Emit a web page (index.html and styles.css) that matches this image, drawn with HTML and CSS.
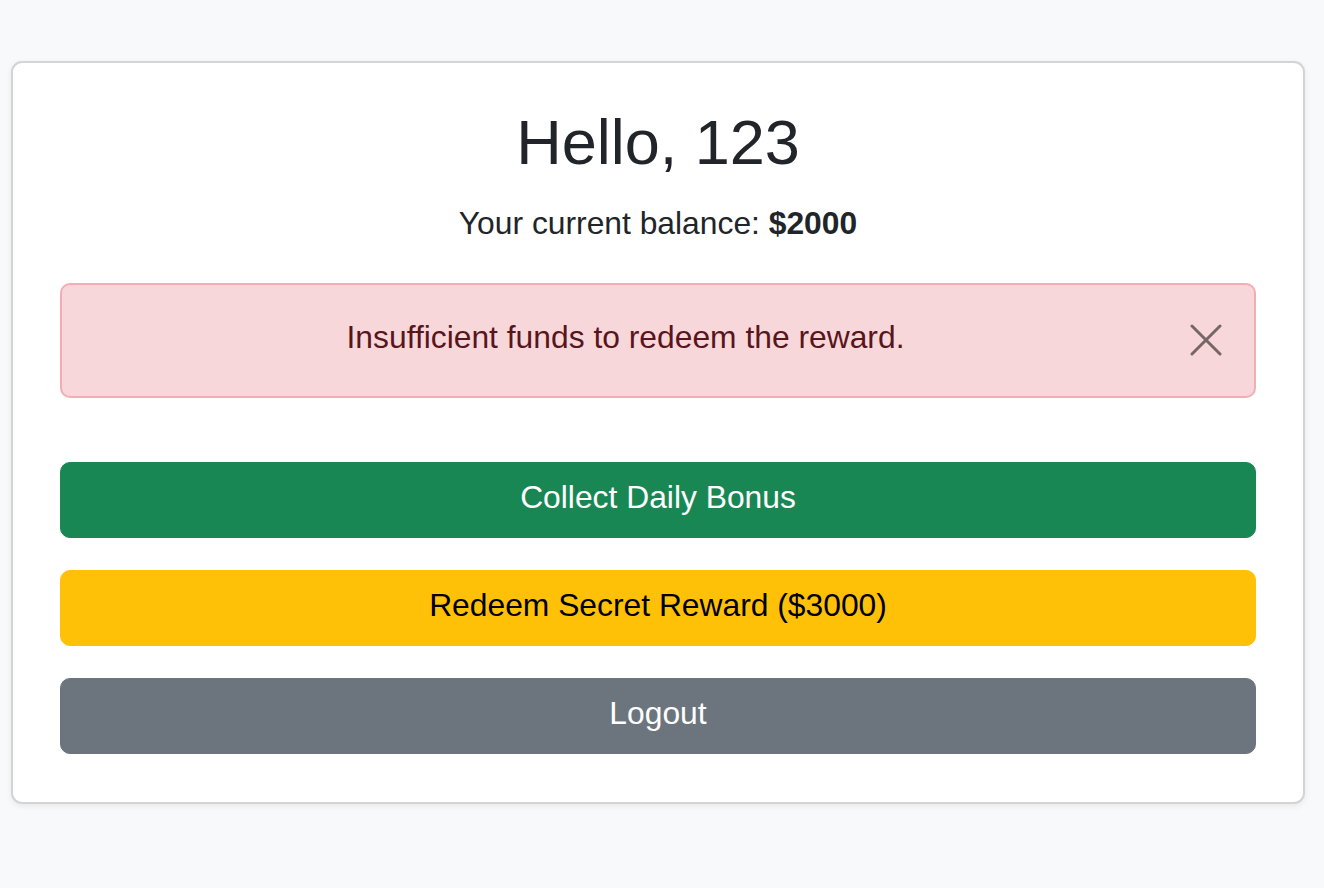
FILE: index.html
```html
<!DOCTYPE html>
<html lang="en">
<head>
<meta charset="utf-8">
<title>Dashboard</title>
<link rel="stylesheet" href="styles.css">
</head>
<body>
  <main class="page">
    <section class="card">
      <h1 class="title">Hello, 123</h1>
      <p class="balance">Your current balance: <strong>$2000</strong></p>
      <div class="alert" role="alert">
        <span class="alert-text">Insufficient funds to redeem the reward.</span>
        <button class="alert-close" type="button" aria-label="Close">
          <svg width="32" height="32" viewBox="0 0 32 32" aria-hidden="true">
            <path d="M2 2 L30 30 M30 2 L2 30" stroke="#000" stroke-width="3" stroke-linecap="round" fill="none"/>
          </svg>
        </button>
      </div>
      <div class="actions">
        <button class="btn btn-success" type="button">Collect Daily Bonus</button>
        <button class="btn btn-warning" type="button">Redeem Secret Reward ($3000)</button>
        <button class="btn btn-secondary" type="button">Logout</button>
      </div>
    </section>
  </main>
</body>
</html>
```

FILE: styles.css
```css
* {
  box-sizing: border-box;
}

html, body {
  margin: 0;
  padding: 0;
}

body {
  background: #f8f9fa;
  font-family: "Liberation Sans", Arial, Helvetica, sans-serif;
  color: #212529;
  min-height: 888px;
}

.page {
  padding: 61px 19px 0 11px;
}

.card {
  background: #ffffff;
  border: 2px solid #d3d4d5;
  border-radius: 11px;
  box-shadow: 0 2px 6px rgba(0, 0, 0, 0.07);
  padding: 42px 47px 48px 47px;
  text-align: center;
}

.title {
  margin: 0 0 19.5px 0;
  font-size: 63px;
  line-height: 1.2;
  font-weight: 400;
  color: #212529;
}

.balance {
  margin: 0 0 36px 0;
  font-size: 31.8px;
  line-height: 47.25px;
  font-weight: 400;
}

.balance strong {
  font-weight: 700;
}

.alert {
  position: relative;
  height: 115px;
  background: #f8d7da;
  border: 2px solid #f1aeb5;
  border-radius: 10px;
  color: #58151c;
  font-size: 31.8px;
  line-height: 47.25px;
  padding: 28.5px 89px 0 24px;
  text-align: center;
  margin-bottom: 64px;
}

.alert-close {
  position: absolute;
  right: 32px;
  top: 39px;
  width: 32px;
  height: 32px;
  padding: 0;
  margin: 0;
  border: 0;
  background: transparent;
  opacity: 0.52;
  cursor: pointer;
  display: block;
}

.alert-close svg {
  display: block;
}

.actions {
  display: flex;
  flex-direction: column;
  gap: 32px;
}

.btn {
  display: block;
  width: 100%;
  height: 76px;
  border: 1px solid transparent;
  border-radius: 10px;
  font-family: inherit;
  font-size: 31.8px;
  line-height: 47.25px;
  padding: 10.5px 16px 17px 16px;
  text-align: center;
  cursor: pointer;
}

.btn-success {
  background: #198754;
  border-color: #198754;
  color: #ffffff;
}

.btn-warning {
  background: #ffc107;
  border-color: #ffc107;
  color: #000000;
}

.btn-secondary {
  background: #6c757d;
  border-color: #6c757d;
  color: #ffffff;
}
```
